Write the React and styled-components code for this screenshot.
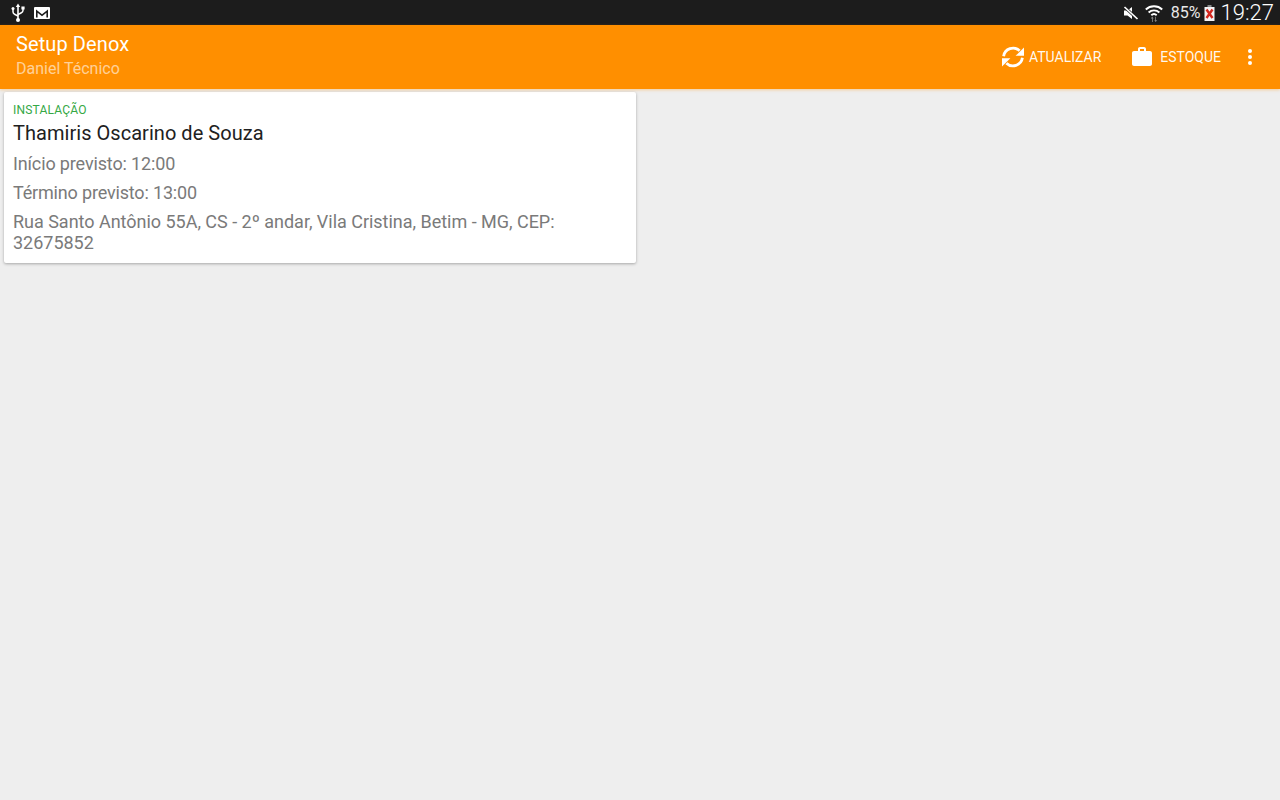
import React from "react";
import styled, { createGlobalStyle } from "styled-components";

const GlobalStyle = createGlobalStyle`
  html, body {
    margin: 0;
    padding: 0;
    height: 100%;
    background: #eeeeee;
    font-family: Roboto, "Liberation Sans", sans-serif;
  }
`;

const Screen = styled.div`
  width: 1280px;
  height: 800px;
  display: flex;
  flex-direction: column;
  overflow: hidden;
  background: #eeeeee;
`;

const StatusBar = styled.div`
  height: 25px;
  background: #1c1c1c;
  display: flex;
  align-items: center;
  justify-content: space-between;
  padding: 0 6px 0 10px;
  color: #fff;
`;

const StatusGroup = styled.div`
  display: flex;
  align-items: center;
  gap: ${(props) => props.$gap || 0}px;
`;

const Battery = styled.span`
  font-size: 16px;
  margin: 0 3px 0 8px;
  color: #e8e8e8;
`;

const Clock = styled.span`
  font-size: 22px;
  font-weight: 300;
  margin-left: 6px;
`;

const AppBar = styled.header`
  height: 64px;
  background: #ff8f00;
  display: flex;
  align-items: center;
  justify-content: space-between;
  padding: 0 28px 0 16px;
  box-shadow: 0 1px 3px rgba(255, 143, 0, 0.35);
  position: relative;
`;

const Titles = styled.div`
  display: flex;
  flex-direction: column;
  margin-top: -1px;
`;

const Title = styled.div`
  font-size: 20px;
  line-height: 24px;
  letter-spacing: 0.1px;
  color: #fff;
`;

const Subtitle = styled.div`
  font-size: 16px;
  line-height: 24px;
  margin-top: 1px;
  color: rgba(255, 255, 255, 0.6);
`;

const Actions = styled.div`
  display: flex;
  align-items: center;
`;

const Action = styled.div`
  display: flex;
  align-items: center;
  gap: ${(props) => props.$gap}px;
  margin-right: ${(props) => props.$right}px;
  color: rgba(255, 255, 255, 0.95);
  font-size: 14px;
`;

const Content = styled.main`
  flex: 1;
  padding: 3px 4px;
`;

const Card = styled.article`
  width: 632px;
  box-sizing: border-box;
  height: 171px;
  padding: 10px 9px 0;
  background: #fff;
  border-radius: 2px;
  box-shadow: 0 1px 3px rgba(0, 0, 0, 0.3);
`;

const Kind = styled.div`
  font-size: 12px;
  line-height: 16px;
  letter-spacing: 0.2px;
  color: #35a845;
`;

const Name = styled.div`
  font-size: 20px;
  line-height: 24px;
  letter-spacing: 0.04px;
  margin-top: 3px;
  color: #212121;
`;

const Info = styled.div`
  font-size: 18px;
  line-height: 21px;
  letter-spacing: ${(props) => props.$spacing || 0}px;
  margin-top: 8px;
  color: #7a7a7a;
`;

const UsbIcon = () => (
  <svg width="16" height="20" viewBox="0 0 16 20" fill="none">
    <path d="M8 2v15" stroke="#fff" strokeWidth="1.6" />
    <path d="M8 0.5 5.8 4h4.4z" fill="#fff" />
    <circle cx="8" cy="17" r="2" fill="#fff" />
    <path d="M3 6v3c0 1.5 1 2 2 2.5L8 13M13 5v2.500c0 1.500-1 2-2 2.500L8 11.500" stroke="#fff" strokeWidth="1.5" />
    <circle cx="3" cy="5.5" r="1.5" fill="#fff" />
    <rect x="11.4" y="3.5" width="3.2" height="3" fill="#fff" />
  </svg>
);

const MailIcon = () => (
  <svg width="16" height="12" viewBox="0 0 16 12">
    <rect width="16" height="12" rx="1" fill="#fff" />
    <path d="M2 10.500V2.500L8 7.200l6-4.700v8h-1.600V5.700L8 9.200 3.600 5.700v4.800z" fill="#1c1c1c" />
  </svg>
);

const MuteIcon = () => (
  <svg width="16" height="14" viewBox="0 0 16 14">
    <path d="M1 4.500h3.500L9 1v12L4.500 9.500H1z" fill="#fff" />
    <path d="M1.500 1 14.500 13" stroke="#1c1c1c" strokeWidth="3" />
    <path d="M1.500 1 14.500 13" stroke="#fff" strokeWidth="1.700" />
  </svg>
);

const WifiIcon = () => (
  <svg width="18" height="18" viewBox="0 0 18 18" fill="none">
    <path d="M0.800 5.500a12 12 0 0 1 16.400 0" stroke="#fff" strokeWidth="1.900" />
    <path d="M3.600 8.500a8 8 0 0 1 10.800 0" stroke="#fff" strokeWidth="1.900" />
    <path d="M6.300 11.300a4 4 0 0 1 5.400 0" stroke="#fff" strokeWidth="1.900" />
    <path d="M7 18v-3.500H5.800L7.300 12.500l1.400 2H7.800V18zM11 12.800v3.500h1.200L10.700 18l-1.400-1.700h.9v-3.500z" fill="#8a8a8a" />
  </svg>
);

const BatteryIcon = () => (
  <svg width="11" height="16" viewBox="0 0 11 16">
    <rect x="3.500" y="0" width="4" height="2" fill="#8a8a8a" />
    <rect x="0.500" y="2" width="10" height="14" fill="#f4f4f4" />
    <path d="M2.500 4.500 8.500 13M8.500 4.500 2.500 13" stroke="#d4281f" strokeWidth="2.400" />
  </svg>
);

const SyncIcon = () => (
  <svg width="24" height="24" viewBox="0 0 24 24" fill="none">
    <path d="M2.600 11.200A9.500 9.500 0 0 1 18.600 5.800" stroke="#fff" strokeWidth="2.800" />
    <path d="M23 2.400v8.400h-8.400z" fill="#fff" />
    <path d="M21.400 12.800A9.500 9.500 0 0 1 5.400 18.200" stroke="#fff" strokeWidth="2.800" />
    <path d="M1 21.600v-8.400h8.400z" fill="#fff" />
  </svg>
);

const WorkIcon = () => (
  <svg width="24" height="24" viewBox="0 0 24 24">
    <path
      fill="#fff"
      d="M20 6h-4V4c0-1.110-.89-2-2-2h-4c-1.110 0-2 .89-2 2v2H4c-1.110 0-2 .89-2 2v11c0 1.110.89 2 2 2h16c1.110 0 2-.89 2-2V8c0-1.110-.89-2-2-2zm-6 0h-4V4h4v2z"
    />
  </svg>
);

const MoreIcon = () => (
  <svg width="4" height="16" viewBox="0 0 4 16">
    <circle cx="2" cy="2" r="2" fill="#fff" />
    <circle cx="2" cy="8" r="2" fill="#fff" />
    <circle cx="2" cy="14" r="2" fill="#fff" />
  </svg>
);

const App = () => {
  return (
    <Screen>
      <GlobalStyle />
      <StatusBar>
        <StatusGroup $gap={8}>
          <UsbIcon />
          <MailIcon />
        </StatusGroup>
        <StatusGroup $gap={0}>
          <StatusGroup $gap={6}>
            <MuteIcon />
            <WifiIcon />
          </StatusGroup>
          <Battery>85%</Battery>
          <BatteryIcon />
          <Clock>19:27</Clock>
        </StatusGroup>
      </StatusBar>
      <AppBar>
        <Titles>
          <Title>Setup Denox</Title>
          <Subtitle>Daniel Técnico</Subtitle>
        </Titles>
        <Actions>
          <Action $gap={4} $right={29}>
            <SyncIcon />
            ATUALIZAR
          </Action>
          <Action $gap={6} $right={27}>
            <WorkIcon />
            ESTOQUE
          </Action>
          <MoreIcon />
        </Actions>
      </AppBar>
      <Content>
        <Card>
          <Kind>INSTALAÇÃO</Kind>
          <Name>Thamiris Oscarino de Souza</Name>
          <Info $spacing={-0.14}>Início previsto: 12:00</Info>
          <Info $spacing={-0.17}>Término previsto: 13:00</Info>
          <Info $spacing={-0.02}>Rua Santo Antônio 55A, CS - 2º andar, Vila Cristina, Betim - MG, CEP: 32675852</Info>
        </Card>
      </Content>
    </Screen>
  );
};

export default App;
